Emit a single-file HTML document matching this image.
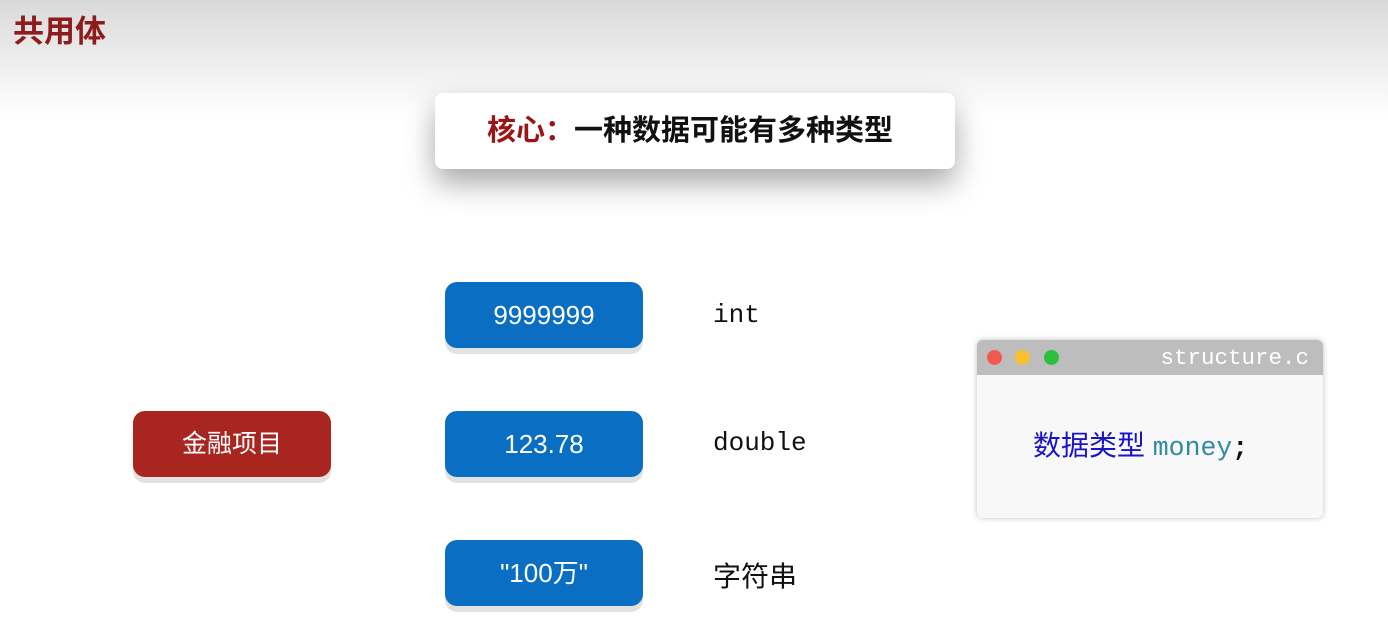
<!DOCTYPE html>
<html><head><meta charset="utf-8"><style>
body{margin:0;width:1388px;height:631px;overflow:hidden;background:#fff;font-family:"Liberation Sans","Noto Sans CJK SC",sans-serif;position:relative}
.hdr{position:absolute;left:0;top:0;width:1388px;height:115px;background:linear-gradient(#d9d9d9,#ececec 50%,#fff)}
.title{position:absolute;left:13px;top:6px;font-size:31px;font-weight:bold;color:#8f1c1c}
.core{position:absolute;left:435px;top:93px;width:520px;height:76px;background:#fff;border-radius:8px;box-shadow:0 14px 30px rgba(0,0,0,.35);font-size:29px;font-weight:bold;line-height:76px;text-indent:52px;color:#111}
.core span{color:#9c1515}
.btn{position:absolute;width:198px;height:66px;border-radius:12px;color:#fff;text-align:center;line-height:66px;font-size:26px;box-shadow:0 6px 0 #e2e2e2}
.b{background:#0a6ec2}.r{background:#a82520}
.lab{position:absolute;left:713px;font-family:"Liberation Mono","Noto Sans CJK SC",monospace;font-size:26px;color:#111}
.win{position:absolute;left:977px;top:340px;width:346px;height:178px;background:#f8f8f8;border-radius:6px;box-shadow:0 0 6px rgba(0,0,0,.25);overflow:hidden}
.tb{height:35px;background:#bdbdbd;position:relative}
.dot{position:absolute;top:10px;width:15px;height:15px;border-radius:50%}
.fn{position:absolute;right:14px;top:5px;font-family:"Liberation Mono",monospace;font-size:22.5px;color:#fff}
.code{position:absolute;left:56px;top:84px;font-size:28px;color:#1a14c8}
.code i{font-style:normal;font-family:"Liberation Mono",monospace;color:#2f8aa5;font-size:26.5px}
.code b{font-family:"Liberation Mono",monospace;color:#111;font-weight:bold;font-size:26.5px}
</style></head><body>
<div class="hdr"></div>
<div class="title">共用体</div>
<div class="core"><span>核心：</span>一种数据可能有多种类型</div>
<div class="btn b" style="left:445px;top:282px">9999999</div>
<div class="btn b" style="left:445px;top:411px">123.78</div>
<div class="btn b" style="left:445px;top:540px">"100万"</div>
<div class="btn r" style="left:133px;top:411px;font-size:25px">金融项目</div>
<div class="lab" style="top:300px">int</div>
<div class="lab" style="top:428px">double</div>
<div class="lab" style="top:555px;font-family:'Noto Sans CJK SC',sans-serif;font-size:28px">字符串</div>
<div class="win"><div class="tb">
<div class="dot" style="left:10px;background:#f35a4f"></div>
<div class="dot" style="left:38px;background:#f8c02c"></div>
<div class="dot" style="left:67px;background:#2cbf3b"></div>
<div class="fn">structure.c</div></div>
<div class="code">数据类型 <i>money</i><b>;</b></div></div>
</body></html>
